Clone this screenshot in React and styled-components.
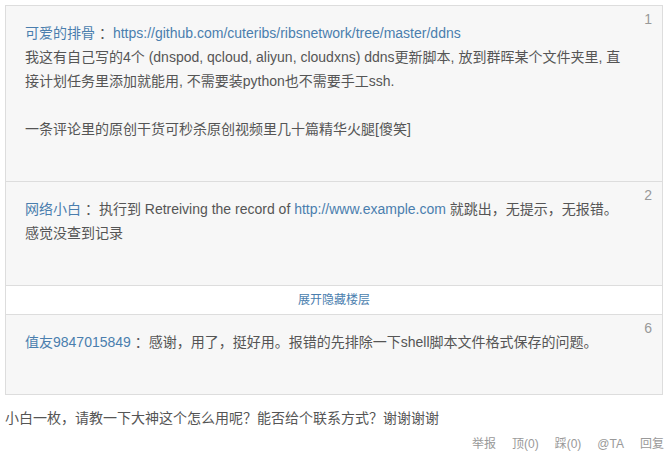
import React from 'react';
import styled, { createGlobalStyle } from 'styled-components';

const GlobalStyle = createGlobalStyle`
  body {
    margin: 0;
    background: #fff;
    font-family: "Liberation Sans", Arial, "Noto Sans CJK SC", sans-serif;
  }
`;

const floors = [
  {
    no: 1,
    name: '可爱的排骨',
    link: 'https://github.com/cuteribs/ribsnetwork/tree/master/ddns',
    lines: [
      '我这有自己写的4个 (dnspod, qcloud, aliyun, cloudxns) ddns更新脚本, 放到群晖某个文件夹里, 直',
      '接计划任务里添加就能用, 不需要装python也不需要手工ssh.',
      '',
      '一条评论里的原创干货可秒杀原创视频里几十篇精华火腿[傻笑]',
    ],
  },
  {
    no: 2,
    name: '网络小白',
    parts: ['执行到 Retreiving the record of ', 'http://www.example.com', ' 就跳出，无提示，无报错。'],
    lines: ['感觉没查到记录'],
  },
];

const App = () => {
  return (
    <Page>
      <GlobalStyle />
      <Quote>
        <Floor>
          <FloorNo>1</FloorNo>
          <Line>
            <Name>{floors[0].name}</Name>
            <Colon> ：</Colon>
            <Link>{floors[0].link}</Link>
          </Line>
          {floors[0].lines.map((l, i) => (
            <Line key={i}>{l || '\u00a0'}</Line>
          ))}
        </Floor>
        <Floor>
          <FloorNo>2</FloorNo>
          <Line>
            <Name>{floors[1].name}</Name>
            <Colon> ：</Colon>
            {floors[1].parts[0]}
            <Link>{floors[1].parts[1]}</Link>
            {floors[1].parts[2]}
          </Line>
          <Line>{floors[1].lines[0]}</Line>
        </Floor>
        <Expand>展开隐藏楼层</Expand>
        <Floor last>
          <FloorNo>6</FloorNo>
          <Line>
            <Name>值友9847015849</Name>
            <Colon> ：</Colon>
            感谢，用了，挺好用。报错的先排除一下shell脚本文件格式保存的问题。
          </Line>
        </Floor>
      </Quote>
      <Reply>小白一枚，请教一下大神这个怎么用呢？能否给个联系方式？谢谢谢谢</Reply>
      <Actions>
        <Action>举报</Action>
        <Action>顶(0)</Action>
        <Action>踩(0)</Action>
        <Action>@TA</Action>
        <Action>回复</Action>
      </Actions>
    </Page>
  );
};

export default App;

const Page = styled.div`
  padding: 5px 4px 0 5px;
  width: 658px;
`;

const Quote = styled.div`
  border: 1px solid #ddd;
  border-bottom: none;
`;

const Floor = styled.div`
  position: relative;
  background: #f7f7f7;
  padding: 15px 40px 40px 19px;
  border-bottom: 1px solid #ddd;
  font-size: 14px;
  line-height: 24px;
  color: #555;
`;

const FloorNo = styled.span`
  position: absolute;
  top: 4px;
  right: 10px;
  font-size: 14px;
  line-height: 18px;
  color: #999;
`;

const Line = styled.div`
  white-space: nowrap;
`;

const Name = styled.span`
  color: #4a7eae;
`;

const Colon = styled.span`
  color: #555;
`;

const Link = styled.span`
  color: #4a7eae;
`;

const Expand = styled.div`
  background: #fff;
  border-bottom: 1px solid #ddd;
  text-align: center;
  font-size: 12px;
  line-height: 28px;
  color: #4a7eae;
`;

const Reply = styled.div`
  margin-top: 11px;
  font-size: 14px;
  line-height: 24px;
  color: #555;
`;

const Actions = styled.div`
  display: flex;
  justify-content: flex-end;
  gap: 16px;
  margin-top: 1px;
  margin-right: -1px;
  font-size: 12px;
  line-height: 26px;
  color: #999;
`;

const Action = styled.span`
  cursor: pointer;
`;
